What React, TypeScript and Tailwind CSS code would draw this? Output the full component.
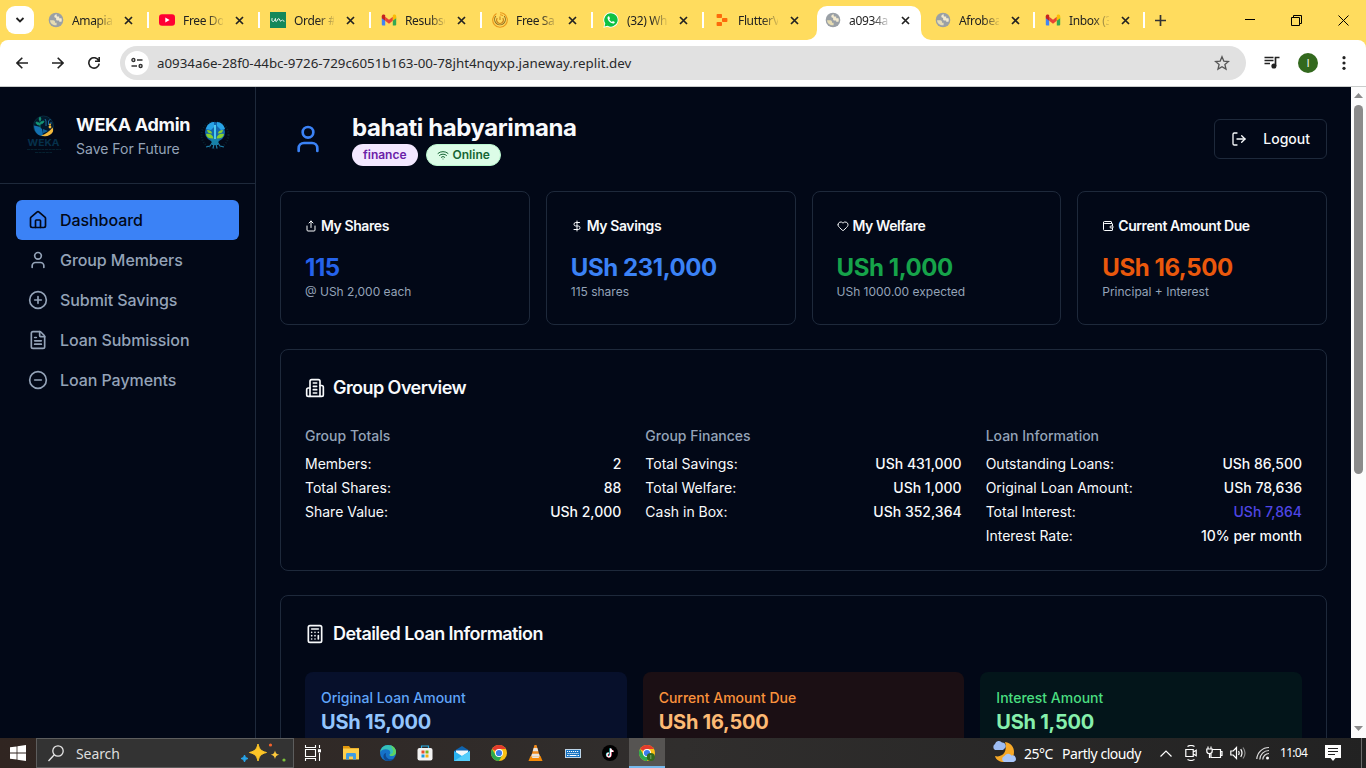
import React from "react";
import {
  Calculator,
  CircleMinus,
  CirclePlus,
  DollarSign,
  FileText,
  Heart,
  House,
  LogOut,
  Share,
  User,
  Wallet,
  Wifi,
} from "lucide-react";

const GlobeIcon = () => (
  <svg width="16" height="16" viewBox="0 0 16 16">
    <circle cx="8" cy="8" r="7.3" fill="#9aa0a6" />
    <path d="M2 8.200h3.300c1 0 1.700.8 1.700 1.700v.9h1.600v2.500C5 13.500 2.200 11.500 2 8.200z" fill="#e6dcb4" />
    <path d="M8.800 2.200c-1.600.3-2.500 1-2.500 2.300 0 1 .8 1.300 1.800 1.300v1.400c0 .8.700 1.300 1.500 1.300h1.600v1.200h2.300c.4-1.100.4-2.300 0-3.400h-2.300V4.500H9.600c-.8 0-1.200-.8-.8-2.300z" fill="#f3ead0" />
  </svg>
);

const YoutubeIcon = () => (
  <svg width="16" height="16" viewBox="0 0 16 16">
    <rect x="0" y="2.300" width="16" height="11.400" rx="3" fill="#ff0033" />
    <path d="M6.300 5.500v5L10.600 8z" fill="#fff" />
  </svg>
);

const OrderIcon = () => (
  <svg width="16" height="16" viewBox="0 0 16 16">
    <rect width="16" height="16" fill="#14885a" />
    <path d="M2 6.500c-.5 2 .2 3.300 1.400 3 1.300-.4 1.800-1.800 2-3-.2 1.500 0 3 .8 3 1 0 1.200-2.800 2.500-2.800 1.200 0 .9 2.500 2 2.500.9 0 .8-1.300 1.500-1.300.600 0 .6 1 1.800 1.300" fill="none" stroke="#fff" strokeWidth="1" strokeLinecap="round" />
  </svg>
);

const GmailIcon = () => (
  <svg width="16" height="16" viewBox="0 0 16 16">
    <path d="M.8 5.500h3.400V13.500H1.800a1 1 0 0 1-1-1z" fill="#4285f4" />
    <path d="M11.800 5.500h3.400v7a1 1 0 0 1-1 1h-2.400z" fill="#34a853" />
    <path d="M4.200 4.800 8 7.700l3.800-2.900v4L8 11.700 4.200 8.800z" fill="#ea4335" />
    <path d="M.8 5.600V4.200c0-1.600 1.700-2.300 2.800-1.400l.6.500v5.500L.8 6.300z" fill="#c5221f" />
    <path d="M15.200 5.600V4.200c0-1.600-1.700-2.300-2.800-1.400l-.6.500v5.500l3.400-2.500z" fill="#fbbc04" />
  </svg>
);

const SpiralIcon = () => (
  <svg width="16" height="16" viewBox="0 0 16 16" fill="none" strokeWidth="1.100">
    <path d="M4.500 1.500A7.300 7.300 0 1 0 11.500 1.500" stroke="#e9981d" />
    <path d="M8 .7a7.300 7.300 0 0 1 4 1.200" stroke="#e9981d" />
    <path d="M3.800 4a5.400 5.400 0 1 0 8.400 0" stroke="#8d6e25" />
    <path d="M8 2.700a5.300 5.300 0 0 1 3 1" stroke="#e9981d" />
    <path d="M5.200 6a3.400 3.400 0 1 0 5.600 0M8 4.500V8" stroke="#c9851f" />
  </svg>
);

const WhatsappIcon = () => (
  <svg width="16" height="16" viewBox="0 0 16 16">
    <path d="M8 .300a7.600 7.600 0 0 0-6.600 11.400L.4 15.700l4.100-1A7.600 7.600 0 1 0 8 .3z" fill="#fff" />
    <path d="M8 1.200a6.700 6.700 0 0 0-5.700 10.300l-.8 3 3.100-.8A6.700 6.700 0 1 0 8 1.200z" fill="#0fc143" />
    <path d="M5.500 4.300c-.6.200-1 1-1 1.700.2 2.700 3.300 5.500 5.700 5.500.9-.1 1.700-.8 1.600-1.600l-1.900-1-.9 1C7.800 9.500 6.700 8.400 6.300 7.300l.7-.8-.7-2z" fill="#fff" />
  </svg>
);

const ReplitIcon = () => (
  <svg width="16" height="16" viewBox="0 0 16 16" fill="#fc6a0b">
    <rect x="2.600" y="2" width="5.400" height="4" rx="0.800" />
    <rect x="8" y="6" width="5.400" height="4" rx="0.800" />
    <rect x="2.600" y="10" width="5.400" height="4" rx="0.800" />
  </svg>
);

type Tab = { title: string; icon: React.ReactNode; cell: string; active?: boolean; sep?: boolean };

const tabs: Tab[] = [
  { title: "Amapia", icon: <GlobeIcon />, cell: "w-[111px]", sep: true },
  { title: "Free Do", icon: <YoutubeIcon />, cell: "w-[111px]", sep: true },
  { title: "Order #", icon: <OrderIcon />, cell: "w-[111px]", sep: true },
  { title: "Resubsc", icon: <GmailIcon />, cell: "w-[111px]", sep: true },
  { title: "Free Sa", icon: <SpiralIcon />, cell: "w-[111px]", sep: true },
  { title: "(32) Wh", icon: <WhatsappIcon />, cell: "w-[111px]", sep: true },
  { title: "FlutterV", icon: <ReplitIcon />, cell: "w-[111px]" },
  { title: "a0934a", icon: <GlobeIcon />, cell: "w-[110px]", active: true },
  { title: "Afrobea", icon: <GlobeIcon />, cell: "w-[110px]", sep: true },
  { title: "Inbox (3", icon: <GmailIcon />, cell: "w-[110px]", sep: true },
];

const BrowserTab = ({ tab }: { tab: Tab }) => (
  <div className={`${tab.cell} relative flex h-10 shrink-0 items-center pl-[10px]`}>
    {tab.active && (
      <svg className="absolute -left-2 top-0" width="124" height="40" viewBox="0 0 124 40">
        <path d="M0 40a10 10 0 0 0 10-10V16A10 10 0 0 1 20 6h84a10 10 0 0 1 10 10v14a10 10 0 0 0 10 10z" fill="#fff" />
      </svg>
    )}
    <span className="relative">{tab.icon}</span>
    <span className="relative ml-2 mt-px w-10 whitespace-nowrap text-[12px] leading-4 tracking-[-0.350px] text-[#222] [mask-image:linear-gradient(to_right,black_60%,transparent_105%)]">
      {tab.title}
    </span>
    <svg className="relative ml-3 shrink-0" width="9" height="9" viewBox="0 0 9 9" stroke="#222" strokeWidth="1.700">
      <path d="M1 1l7 7M8 1L1 8" />
    </svg>
    {tab.sep && <span className="absolute right-0 top-3 h-4 w-[2px] bg-white" />}
  </div>
);

const Browser = () => (
  <header className="shrink-0 font-['Noto_Sans',sans-serif]">
    <div className="flex h-10 items-center bg-[#ffdc5e]">
      <div className="ml-[6px] mr-1 flex h-7 w-7 shrink-0 items-center justify-center rounded-[9px] bg-white">
        <svg width="10" height="8" viewBox="0 0 10 8" fill="none" stroke="#222" strokeWidth="1.800">
          <path d="M1.500 2L5 5.500 8.500 2" />
        </svg>
      </div>
      {tabs.map((t) => (
        <BrowserTab key={t.title} tab={t} />
      ))}
      <svg className="ml-[10px]" width="11" height="11" viewBox="0 0 11 11" stroke="#333" strokeWidth="1.700">
        <path d="M5.500 0v11M0 5.500h11" />
      </svg>
      <div className="ml-auto flex items-center gap-9 pr-[17px]">
        <svg width="10" height="11" viewBox="0 0 10 11" stroke="#000">
          <path d="M0 4.500h10" />
        </svg>
        <svg width="11" height="11" viewBox="0 0 11 11" fill="none" stroke="#000">
          <path d="M.5 2.500h8v8h-8zM2.500 2.500v-2h8v8h-2" />
        </svg>
        <svg width="11" height="11" viewBox="0 0 11 11" stroke="#000">
          <path d="M.5.5l10 10M10.500.5l-10 10" />
        </svg>
      </div>
    </div>
    <div className="bg-[#ffdc5e]">
      <div className="flex h-[47px] items-center rounded-t-lg border-b border-[#c9cccb] bg-white">
        <svg className="ml-4" width="12" height="12" viewBox="0 0 12 12" fill="none" stroke="#222" strokeWidth="1.600">
          <path d="M12 6H1M6.300.7L1 6l5.300 5.300" />
        </svg>
        <svg className="ml-6" width="12" height="12" viewBox="0 0 12 12" fill="none" stroke="#222" strokeWidth="1.600">
          <path d="M0 6h11M5.700.7L11 6l-5.300 5.300" />
        </svg>
        <svg className="ml-6" width="12" height="12" viewBox="0 0 12 12" fill="none" stroke="#222" strokeWidth="1.600">
          <path d="M10.600 3.400A5.200 5.200 0 1 0 11.200 6.600M11.200 0v4.200H7" />
        </svg>
        <div className="ml-5 flex h-[34px] w-[1126px] items-center rounded-full bg-[#e1e1e1] pl-[5px] pr-4">
          <div className="flex h-6 w-6 items-center justify-center rounded-full bg-white">
            <svg width="12" height="12" viewBox="0 0 12 12" fill="none" stroke="#333" strokeWidth="1.400">
              <circle cx="2.400" cy="3" r="1.500" />
              <path d="M6 3h5.500M.5 9H6" />
              <circle cx="9.600" cy="9" r="1.500" />
            </svg>
          </div>
          <span className="ml-2 mt-px whitespace-nowrap text-[13.33px] text-[#28292b]">
            a0934a6e-28f0-44bc-9726-729c6051b163-00-78jht4nqyxp.janeway.replit.dev
          </span>
          <svg className="ml-auto" width="16" height="16" viewBox="0 0 16 16" fill="none" stroke="#555" strokeWidth="1.300">
            <path d="M8 1.800l1.800 4.300 4.700.4-3.600 3 1.100 4.600L8 11.700l-4 2.400 1.100-4.600-3.600-3 4.700-.4z" />
          </svg>
        </div>
        <svg className="ml-[18px]" width="16" height="14" viewBox="0 0 16 14" fill="none" stroke="#222" strokeWidth="1.700">
          <path d="M.5 1.500h9M.5 4.500h9M.5 7.500h5.500M11.500 10V1.500H15.500" />
          <circle cx="9.900" cy="10" r="1.700" fill="#222" />
        </svg>
        <div className="ml-[18px] flex h-5 w-5 items-center justify-center rounded-full bg-[#33691e] font-['Roboto',sans-serif] text-[10px] text-white">I</div>
        <svg className="ml-6" width="4" height="14" viewBox="0 0 4 14" fill="#222">
          <circle cx="2" cy="1.700" r="1.600" />
          <circle cx="2" cy="7" r="1.600" />
          <circle cx="2" cy="12.300" r="1.600" />
        </svg>
      </div>
    </div>
  </header>
);

const WekaLogo = () => (
  <svg className="shrink-0" width="40" height="40" viewBox="0 0 40 40">
    <circle cx="19.500" cy="11" r="10" fill="#03182b" stroke="#0a3145" strokeWidth="0.800" />
    <path d="M10 10.500c3 .5 6 1 8 3.500l1 7c-5 0-9-4-9-10.500z" fill="#1470b0" />
    <path d="M19 14l5 2-6 3z" fill="#0f5f98" />
    <path d="M17 20.500c5-1 9-5 11.500-8 .8 1.500.8 3 .3 4.500-2 3.500-6.800 5.500-11.800 3.500z" fill="#f4b93c" />
    <path d="M16 13V6M16 10c-3 0-4-1-4-3 2 0 4 1 4 3zm0-1c0-2 2-3 4-3 0 2-2 3-4 3zM16 6l-1-2 1-2 1 2z" fill="#159a78" stroke="#159a78" strokeWidth="0.700" />
    <path d="M22 11V6M24.500 10V6l2-2M27 9V7M22 6l-1-2" stroke="#1d72a8" strokeWidth="0.900" fill="none" />
    <circle cx="26" cy="9.500" r="1" fill="#f4b93c" />
    <circle cx="26" cy="12" r="1.400" fill="#f4b93c" />
    <text x="3.500" y="30.500" fontSize="9.500" fontWeight="700" textLength="32" lengthAdjust="spacingAndGlyphs" fill="#06304a">WEKA</text>
    <path d="M3 34.500h34M11 37.500h17" stroke="#06202f" strokeWidth="1" strokeDasharray="3 .6" />
  </svg>
);

const TreeLogo = () => (
  <svg className="shrink-0" width="30" height="30" viewBox="0 0 30 30">
    <circle cx="15" cy="15" r="13.500" fill="none" stroke="#08202e" strokeWidth="2" strokeDasharray="1 1.600" />
    <circle cx="15" cy="12" r="10" fill="#1266ad" />
    <path d="M7 6c2-2.500 4-4 7-4v5l-3 3-5-1zM17 2c4 0 7 3 8 7l-4 1-4-4z" fill="#28a3e6" />
    <path d="M14 5h2v20h-2z" fill="#4fc8ee" />
    <path d="M6 14c4-1 7 1 7.500 4.500-4 .5-7-1-7.500-4.500zM24 14c-4-1-7 1-7.500 4.500 4 .5 7-1 7.500-4.500zM7 10c3 0 5 1.500 5 3.500-3 0-5-1-5-3.500zM23 10c-3 0-5 1.500-5 3.500 3 0 5-1 5-3.500z" fill="#86cf30" />
    <path d="M11 19h8l-1 6h-6z" fill="#1582a8" />
    <path d="M12 23l-2 3-4 1M14 24l-1 4.500M16 24l1 4.500M18 23l2 3 4 1" stroke="#1f7da6" strokeWidth="1.200" fill="none" />
  </svg>
);

const BuildingIcon = () => (
  <svg width="20" height="20" viewBox="0 0 24 24" fill="none" stroke="currentColor" strokeWidth="2" strokeLinecap="round" strokeLinejoin="round">
    <path d="M6 22V4a2 2 0 0 1 2-2h8a2 2 0 0 1 2 2v18Z" />
    <path d="M6 12H4a2 2 0 0 0-2 2v6a2 2 0 0 0 2 2h2" />
    <path d="M18 9h2a2 2 0 0 1 2 2v9a2 2 0 0 1-2 2h-2" />
    <path d="M10 6h4M10 10h4M10 14h4M10 18h4" />
  </svg>
);

const navItems = [
  { label: "Dashboard", Icon: House, active: true },
  { label: "Group Members", Icon: User },
  { label: "Submit Savings", Icon: CirclePlus },
  { label: "Loan Submission", Icon: FileText },
  { label: "Loan Payments", Icon: CircleMinus },
];

const Sidebar = () => (
  <aside className="w-64 shrink-0 border-r border-[#1e293b]">
    <div className="flex items-center border-b border-[#1e293b] p-6">
      <WekaLogo />
      <div className="ml-3 w-[114px]">
        <h2 className="whitespace-nowrap text-lg leading-7 font-bold tracking-[-0.300px]">WEKA Admin</h2>
        <p className="text-sm whitespace-nowrap text-[#94a3b8]">Save For Future</p>
      </div>
      <div className="ml-[10px]">
        <TreeLogo />
      </div>
    </div>
    <nav className="p-4">
      {navItems.map(({ label, Icon, active }) => (
        <a
          key={label}
          className={`flex h-10 items-center gap-3 rounded-md px-3 font-medium tracking-[-0.070px] ${active ? "bg-[#3b82f6] text-[#020817]" : "text-[#94a3b8]"}`}
        >
          <Icon size={20} />
          {label}
        </a>
      ))}
    </nav>
  </aside>
);

const stats = [
  { title: "My Shares", Icon: Share, value: "115", sub: "@ USh 2,000 each", color: "text-[#2563eb]" },
  { title: "My Savings", Icon: DollarSign, value: "USh 231,000", sub: "115 shares", color: "text-[#3b82f6]" },
  { title: "My Welfare", Icon: Heart, value: "USh 1,000", sub: "USh 1000.00 expected", color: "text-[#16a34a]" },
  { title: "Current Amount Due", Icon: Wallet, value: "USh 16,500", sub: "Principal + Interest", color: "text-[#ea580c]" },
];

const overview = [
  { title: "Group Totals", rows: [["Members:", "2"], ["Total Shares:", "88"], ["Share Value:", "USh 2,000"]] },
  { title: "Group Finances", rows: [["Total Savings:", "USh 431,000"], ["Total Welfare:", "USh 1,000"], ["Cash in Box:", "USh 352,364"]] },
  {
    title: "Loan Information",
    rows: [["Outstanding Loans:", "USh 86,500"], ["Original Loan Amount:", "USh 78,636"], ["Total Interest:", "USh 7,864"], ["Interest Rate:", "10% per month"]],
  },
];

const loans = [
  { title: "Original Loan Amount", value: "USh 15,000", box: "bg-[#07102b]", label: "text-[#60a5fa]", amount: "text-[#93c5fd]" },
  { title: "Current Amount Due", value: "USh 16,500", box: "bg-[#1b0f14]", label: "text-[#fb923c]", amount: "text-[#fdba74]" },
  { title: "Interest Amount", value: "USh 1,500", box: "bg-[#03151a]", label: "text-[#4ade80]", amount: "text-[#86efac]" },
];

const Dashboard = () => (
  <main className="flex min-w-0 flex-1 flex-col gap-6 overflow-hidden p-6">
    <div className="flex h-14 shrink-0 items-center">
      <div className="flex h-14 w-14 items-center justify-center text-[#3b82f6]">
        <User size={32} />
      </div>
      <div className="ml-4">
        <h1 className="text-2xl leading-8 font-bold tracking-[-0.420px]">bahati habyarimana</h1>
        <div className="flex gap-2">
          <span className="rounded-full border border-transparent bg-[#f3e8ff] px-2.5 py-0.5 text-xs font-semibold text-[#6b21a8]">finance</span>
          <span className="flex items-center rounded-full border border-[#bbf7d0] bg-[#dcfce7] px-2.5 py-0.5 text-xs font-semibold text-[#166534]">
            <Wifi size={12} className="mr-1" />
            Online
          </span>
        </div>
      </div>
      <button className="ml-auto flex h-10 items-center gap-4 rounded-md border border-[#1e293b] px-4 text-sm font-medium">
        <LogOut size={16} />
        Logout
      </button>
    </div>

    <div className="grid shrink-0 grid-cols-4 gap-4">
      {stats.map(({ title, Icon, value, sub, color }) => (
        <section key={title} className="rounded-lg border border-[#1e293b] p-6">
          <h3 className="flex items-center gap-1 text-sm font-semibold tracking-[-0.420px]">
            <Icon size={12} />
            {title}
          </h3>
          <div className={`mt-4 text-2xl leading-8 font-bold tracking-[-0.420px] ${color}`}>{value}</div>
          <p className="text-xs text-[#94a3b8]">{sub}</p>
        </section>
      ))}
    </div>

    <section className="shrink-0 rounded-lg border border-[#1e293b] p-6">
      <h3 className="flex items-center gap-2 text-lg leading-7 font-semibold tracking-[-0.560px]">
        <BuildingIcon />
        Group Overview
      </h3>
      <div className="mt-6 grid grid-cols-3 gap-6">
        {overview.map((col) => (
          <div key={col.title}>
            <h4 className="mb-2 text-sm font-medium text-[#94a3b8]">{col.title}</h4>
            <div className="flex flex-col gap-1 text-sm">
              {col.rows.map(([k, v]) => (
                <div key={k} className="flex justify-between">
                  <span>{k}</span>
                  <span className={k === "Total Interest:" ? "font-medium text-[#4f46e5]" : "font-medium"}>{v}</span>
                </div>
              ))}
            </div>
          </div>
        ))}
      </div>
    </section>

    <section className="shrink-0 rounded-lg border border-[#1e293b] p-6">
      <h3 className="flex items-center gap-2 text-lg leading-7 font-semibold tracking-[-0.560px]">
        <Calculator size={20} />
        Detailed Loan Information
      </h3>
      <div className="mt-6 grid grid-cols-3 gap-4">
        {loans.map((l) => (
          <div key={l.title} className={`h-24 rounded-lg p-4 ${l.box}`}>
            <p className={`text-sm font-medium ${l.label}`}>{l.title}</p>
            <p className={`text-xl leading-7 font-bold tracking-[-0.250px] ${l.amount}`}>{l.value}</p>
          </div>
        ))}
      </div>
    </section>
  </main>
);

const Scrollbar = () => (
  <div className="flex w-[15px] shrink-0 flex-col items-center bg-[#fcfcfc] pt-[6px]">
    <svg width="9" height="5" viewBox="0 0 9 5" fill="#8b8b8b"><path d="M0 5L4.500 0 9 5z" /></svg>
    <div className="mt-[7px] h-[369px] w-[9px] rounded-full bg-[#8b8b8b]" />
    <svg className="mt-auto mb-[7px]" width="9" height="5" viewBox="0 0 9 5" fill="#8b8b8b"><path d="M0 0h9L4.500 5z" /></svg>
  </div>
);

const ChromeIcon = ({ badge }: { badge?: boolean }) => (
  <svg width="16" height="16" viewBox="0 0 16 16">
    <circle cx="8" cy="8" r="8" fill="#fbc116" />
    <path d="M1.070 4A8 8 0 0 1 14.930 4H8v4z" fill="#e33b2e" />
    <path d="M1.070 4A8 8 0 0 0 8 16l3.500-6L8 8 4.500 10z" fill="#2da94f" />
    <circle cx="8" cy="8" r="4" fill="#fff" />
    <circle cx="8" cy="8" r="3.100" fill="#3b7ded" />
    {badge && <circle cx="11.800" cy="12" r="4" fill="#33691e" />}
    {badge && <path d="M11.800 10v4" stroke="#7ea36b" />}
  </svg>
);

const TaskIcons = () => (
  <div className="flex h-full">
    <div className="flex w-[37px] items-center justify-center">
      <svg width="17" height="16" viewBox="0 0 17 16" fill="none" stroke="#fff" strokeWidth="1.100">
        <path d="M1.500 0v2.500h10V0M1.500 16v-2.500h10V16M1.500 4.500h10v7h-10zM15.500 0v3M15.500 8v8" />
        <rect x="14.500" y="4.800" width="2" height="2" fill="#fff" />
      </svg>
    </div>
    <div className="ml-px flex w-[37px] items-center justify-center">
      <svg width="16" height="14" viewBox="0 0 16 14">
        <path d="M0 0h6l1.500 2H16v2H0z" fill="#e0960c" />
        <path d="M0 2.500h16V13.500H0z" fill="#ffcf4a" />
        <path d="M3 13.500V8.500c0-1 .5-1.500 1.500-1.500h7c1 0 1.500.5 1.500 1.500v5h-3v-3H6v3z" fill="#3f9ce2" />
      </svg>
    </div>
    <div className="flex w-[37px] items-center justify-center">
      <svg width="16" height="16" viewBox="0 0 16 16">
        <circle cx="8" cy="8" r="8" fill="#1572c9" />
        <path d="M0 7.500C.5 3 4 0 8 0c5 0 8 3.500 8 7 0 2.500-2 4-4.200 4-1.800 0-2.300-.8-2.300-1.300 0-.6.8-.8.8-2.200C10.300 5.500 8 4.300 5.800 4.300 2.500 4.300.6 6 0 7.500z" fill="#35c1b8" />
        <path d="M10 .3c4 .9 6 4 6 6.700 0 2.500-2 4-4.200 4-1.800 0-2.300-.8-2.300-1.300 2 0 4-1.500 3.500-4.500A7 7 0 0 0 10 .3z" fill="#5fd35f" />
        <path d="M6 8c-1 3 1 6.500 5 6.300 1.500 0 3-.7 3.800-1.500C13.500 15 11 16 8.500 16 5 16 3 13 3.500 10.500 3.800 9 4.800 8 6 8z" fill="#0d4a93" />
      </svg>
    </div>
    <div className="flex w-[37px] items-center justify-center">
      <svg width="16" height="16" viewBox="0 0 16 16">
        <path d="M4.500 4V1h7v3" fill="none" stroke="#2ab0e8" strokeWidth="1.200" />
        <rect x=".5" y="3" width="15" height="12.500" rx="2" fill="#f3f3f3" />
        <path d="M4.500 5.500h3v3h-3z" fill="#e8502e" />
        <path d="M8.500 5.500h3v3h-3z" fill="#78b41c" />
        <path d="M4.500 9.500h3v3h-3z" fill="#1d9be0" />
        <path d="M8.500 9.500h3v3h-3z" fill="#f5b312" />
      </svg>
    </div>
    <div className="flex w-[37px] items-center justify-center">
      <svg width="16" height="15" viewBox="0 0 16 15">
        <path d="M0 5l8-5 8 5v2H0z" fill="#0f63ad" />
        <path d="M2 4.500h12V10H2z" fill="#f4f7fa" />
        <path d="M0 5l8 5 8-5v10H0z" fill="#28b2f2" />
        <path d="M0 15L16 5v10z" fill="#55cdfa" />
      </svg>
    </div>
    <div className="flex w-[37px] items-center justify-center"><ChromeIcon /></div>
    <div className="flex w-[37px] items-center justify-center">
      <svg width="15" height="16" viewBox="0 0 15 16">
        <path d="M6.500 0h2l3.500 12H3z" fill="#f08a1c" />
        <path d="M5.700 3h3.600l1 3.200H4.700zM4 8.700h7l.7 2.300H3.300z" fill="#e8e4df" />
        <path d="M2.500 11h10l2 5H.5z" fill="#f58a07" />
        <path d="M3.200 11.300h8.600L10.500 13h-6z" fill="#e8e4df" />
      </svg>
    </div>
    <div className="flex w-[37px] items-center justify-center">
      <svg width="16" height="9" viewBox="0 0 16 9">
        <rect x=".5" y=".5" width="15" height="8" fill="#1572c2" stroke="#bcd4e8" />
        <path d="M2 2.500h12M2.500 4.500h11" stroke="#fff" strokeDasharray="1.200 .8" />
        <path d="M2 6.500h1.500M4.500 6.500h7M12.500 6.500H14" stroke="#fff" />
      </svg>
    </div>
    <div className="flex w-[37px] items-center justify-center">
      <svg width="16" height="16" viewBox="0 0 16 16" fill="none">
        <circle cx="8" cy="8" r="8" fill="#000" />
        <path d="M8.200 3.200v6.600a1.800 1.800 0 1 1-1.700-1.900M8.200 3.500c.3 1.500 1.300 2.400 2.800 2.600" stroke="#25e5df" strokeWidth="1.500" />
        <path d="M9 3.700v6.600a1.800 1.800 0 1 1-1.700-1.900M9 4c.3 1.500 1.300 2.400 2.800 2.600" stroke="#f4355c" strokeWidth="1.500" />
        <path d="M8.600 3.500v6.600a1.800 1.800 0 1 1-1.700-1.900M8.600 3.700c.3 1.500 1.300 2.400 2.800 2.600" stroke="#fff" strokeWidth="1.300" />
      </svg>
    </div>
    <div className="ml-px flex w-9 items-center justify-center border-b-2 border-[#76b9ed] bg-[#565452] pt-[2px]"><ChromeIcon badge /></div>
  </div>
);

const Tray = () => (
  <div className="ml-auto flex h-full w-[375px] items-center text-white">
    <svg width="26" height="24" viewBox="0 0 26 24" className="-mt-[2px]">
      <path d="M14 2c6 1 9 5 9 10 0 6-4 10-10 10-4 0-8-2-9-6 7 2 13-4 10-14z" fill="#f7a928" />
      <path d="M4 10a3.500 3.500 0 0 1 0-6 4 4 0 0 1 7-1.500 3.500 3.500 0 0 1 2 6.500l-1 1z" fill="#9dbcf2" />
      <path d="M13 22a3.200 3.200 0 0 1 .5-6 4 4 0 0 1 7-.5 3.300 3.300 0 0 1 2 6.500z" fill="#a9c6fa" />
    </svg>
    <span className="ml-[7px] w-[38px] whitespace-nowrap text-[14px] tracking-[-0.500px]">25°C</span>
    <span className="w-[98px] whitespace-nowrap text-[14px] tracking-[-0.450px]">Partly cloudy</span>
    <svg width="12" height="7" viewBox="0 0 12 7" fill="none" stroke="#fff" strokeWidth="1.200"><path d="M.5 6.500L6 1l5.500 5.500" /></svg>
    <svg className="ml-[13px]" width="12" height="16" viewBox="0 0 12 16" fill="none" stroke="#fff" strokeWidth="1.200">
      <path d="M2.500 1.500Q6-.500 9.500 1.500M2.500 14.500Q6 16.500 9.500 14.500M.8 4.500h7.400v7H.8zM8.200 7l3-1.800v5.600L8.200 9" />
    </svg>
    <svg className="ml-[9px]" width="17" height="14" viewBox="0 0 17 14" fill="none" stroke="#fff" strokeWidth="1.200">
      <path d="M6.500 3.500H14.500v8H5V8M15 5.500h1v4h-1M2 .5v2.500M5 .5v2.500M.8 3h5.400v2a2.700 2.700 0 0 1-5.400 0zM3.500 7.500V12" />
    </svg>
    <svg className="ml-[7px]" width="17" height="14" viewBox="0 0 17 14" fill="none" stroke="#fff" strokeWidth="1.200">
      <path d="M.8 5h2.400L6.500 1.500v11L3.200 9H.8zM8.500 5q1.300 2 0 4M10.700 3.200q2.600 3.800 0 7.600" />
      <path d="M13 1.500q4 5.500 0 11" stroke="#888" />
    </svg>
    <svg className="ml-[9px]" width="14" height="14" viewBox="0 0 14 14" fill="none" stroke="#ddd" strokeWidth="1.200">
      <path d="M.8 13A12.200 12.200 0 0 1 13 1.500M3.800 13.500A9.200 9.200 0 0 1 13 4.500M6.800 13.500A6.200 6.200 0 0 1 13 7.500" />
      <circle cx="11.500" cy="12" r="1.500" fill="#fff" stroke="none" />
    </svg>
    <span className="ml-[10px] w-[45px] whitespace-nowrap text-[12px] tracking-[-0.700px]">11:04</span>
    <svg width="16" height="16" viewBox="0 0 16 16">
      <path d="M0 0h16v13h-5.500L8 16l-2.500-3H0z" fill="#fff" />
      <path d="M3 3.500h10M3 6.500h10M3 9.500h7" stroke="#222" />
    </svg>
    <div className="mr-1 ml-auto h-full w-px bg-[#6b6b6b]" />
  </div>
);

const Taskbar = () => (
  <footer className="flex h-[30px] shrink-0 items-center bg-gradient-to-r from-[#302521] via-[#302e2d] to-[#222222] font-['Noto_Sans',sans-serif]">
    <div className="flex w-9 shrink-0 items-center justify-center">
      <svg width="16" height="16" viewBox="0 0 16 16" fill="#fff">
        <path d="M0 2.300l6.600-.9v6.200H0zM7.400 1.200L16 0v7.600H7.400zM0 8.400h6.600v6.200L0 13.700zM7.400 8.400H16V16l-8.600-1.200z" />
      </svg>
    </div>
    <div className="flex h-[30px] w-[258px] shrink-0 items-center border border-[#5d5d5d] bg-[#333] pl-[11px]">
      <svg width="16" height="17" viewBox="0 0 16 17" fill="none" stroke="#e6e6e6" strokeWidth="1.300">
        <circle cx="10" cy="6" r="5.200" />
        <path d="M6.300 9.700L.5 16" />
      </svg>
      <span className="ml-3 text-[14px] tracking-[-0.100px] text-[#dedede]">Search</span>
      <svg className="ml-auto mr-[7px]" width="46" height="20" viewBox="0 0 46 20">
        <path d="M18 1c1.500 5.500 3 7 8.500 8.500C21 11 19.500 12.500 18 18c-1.500-5.500-3-7-8.500-8.500C15 8 16.500 6.500 18 1z" fill="#fdc526" stroke="#fdc526" strokeLinejoin="round" />
        <path d="M35 7.500c.7 2.800 1.500 3.600 4.300 4.300-2.800.7-3.600 1.500-4.300 4.300-.7-2.800-1.500-3.600-4.300-4.300 2.800-.7 3.600-1.500 4.300-4.300z" fill="#fdc93c" />
        <path d="M4.500 12l1 2.500 2.500 1-2.500 1-1 2.500-1-2.500-2.500-1 2.500-1z" fill="#27a5ea" stroke="#27a5ea" />
        <circle cx="30.500" cy="2" r="1.600" fill="#f4622c" />
        <circle cx="44" cy="17" r="1.600" fill="#7cbf3a" />
      </svg>
    </div>
    <TaskIcons />
    <Tray />
  </footer>
);

export default function App() {
  return (
    <div className="flex h-[768px] w-[1366px] flex-col overflow-hidden">
      <Browser />
      <div className="flex min-h-0 flex-1 overflow-hidden bg-[#020817] font-['Inter',sans-serif] text-[#f8fafc]">
        <Sidebar />
        <Dashboard />
        <Scrollbar />
      </div>
      <Taskbar />
    </div>
  );
}
